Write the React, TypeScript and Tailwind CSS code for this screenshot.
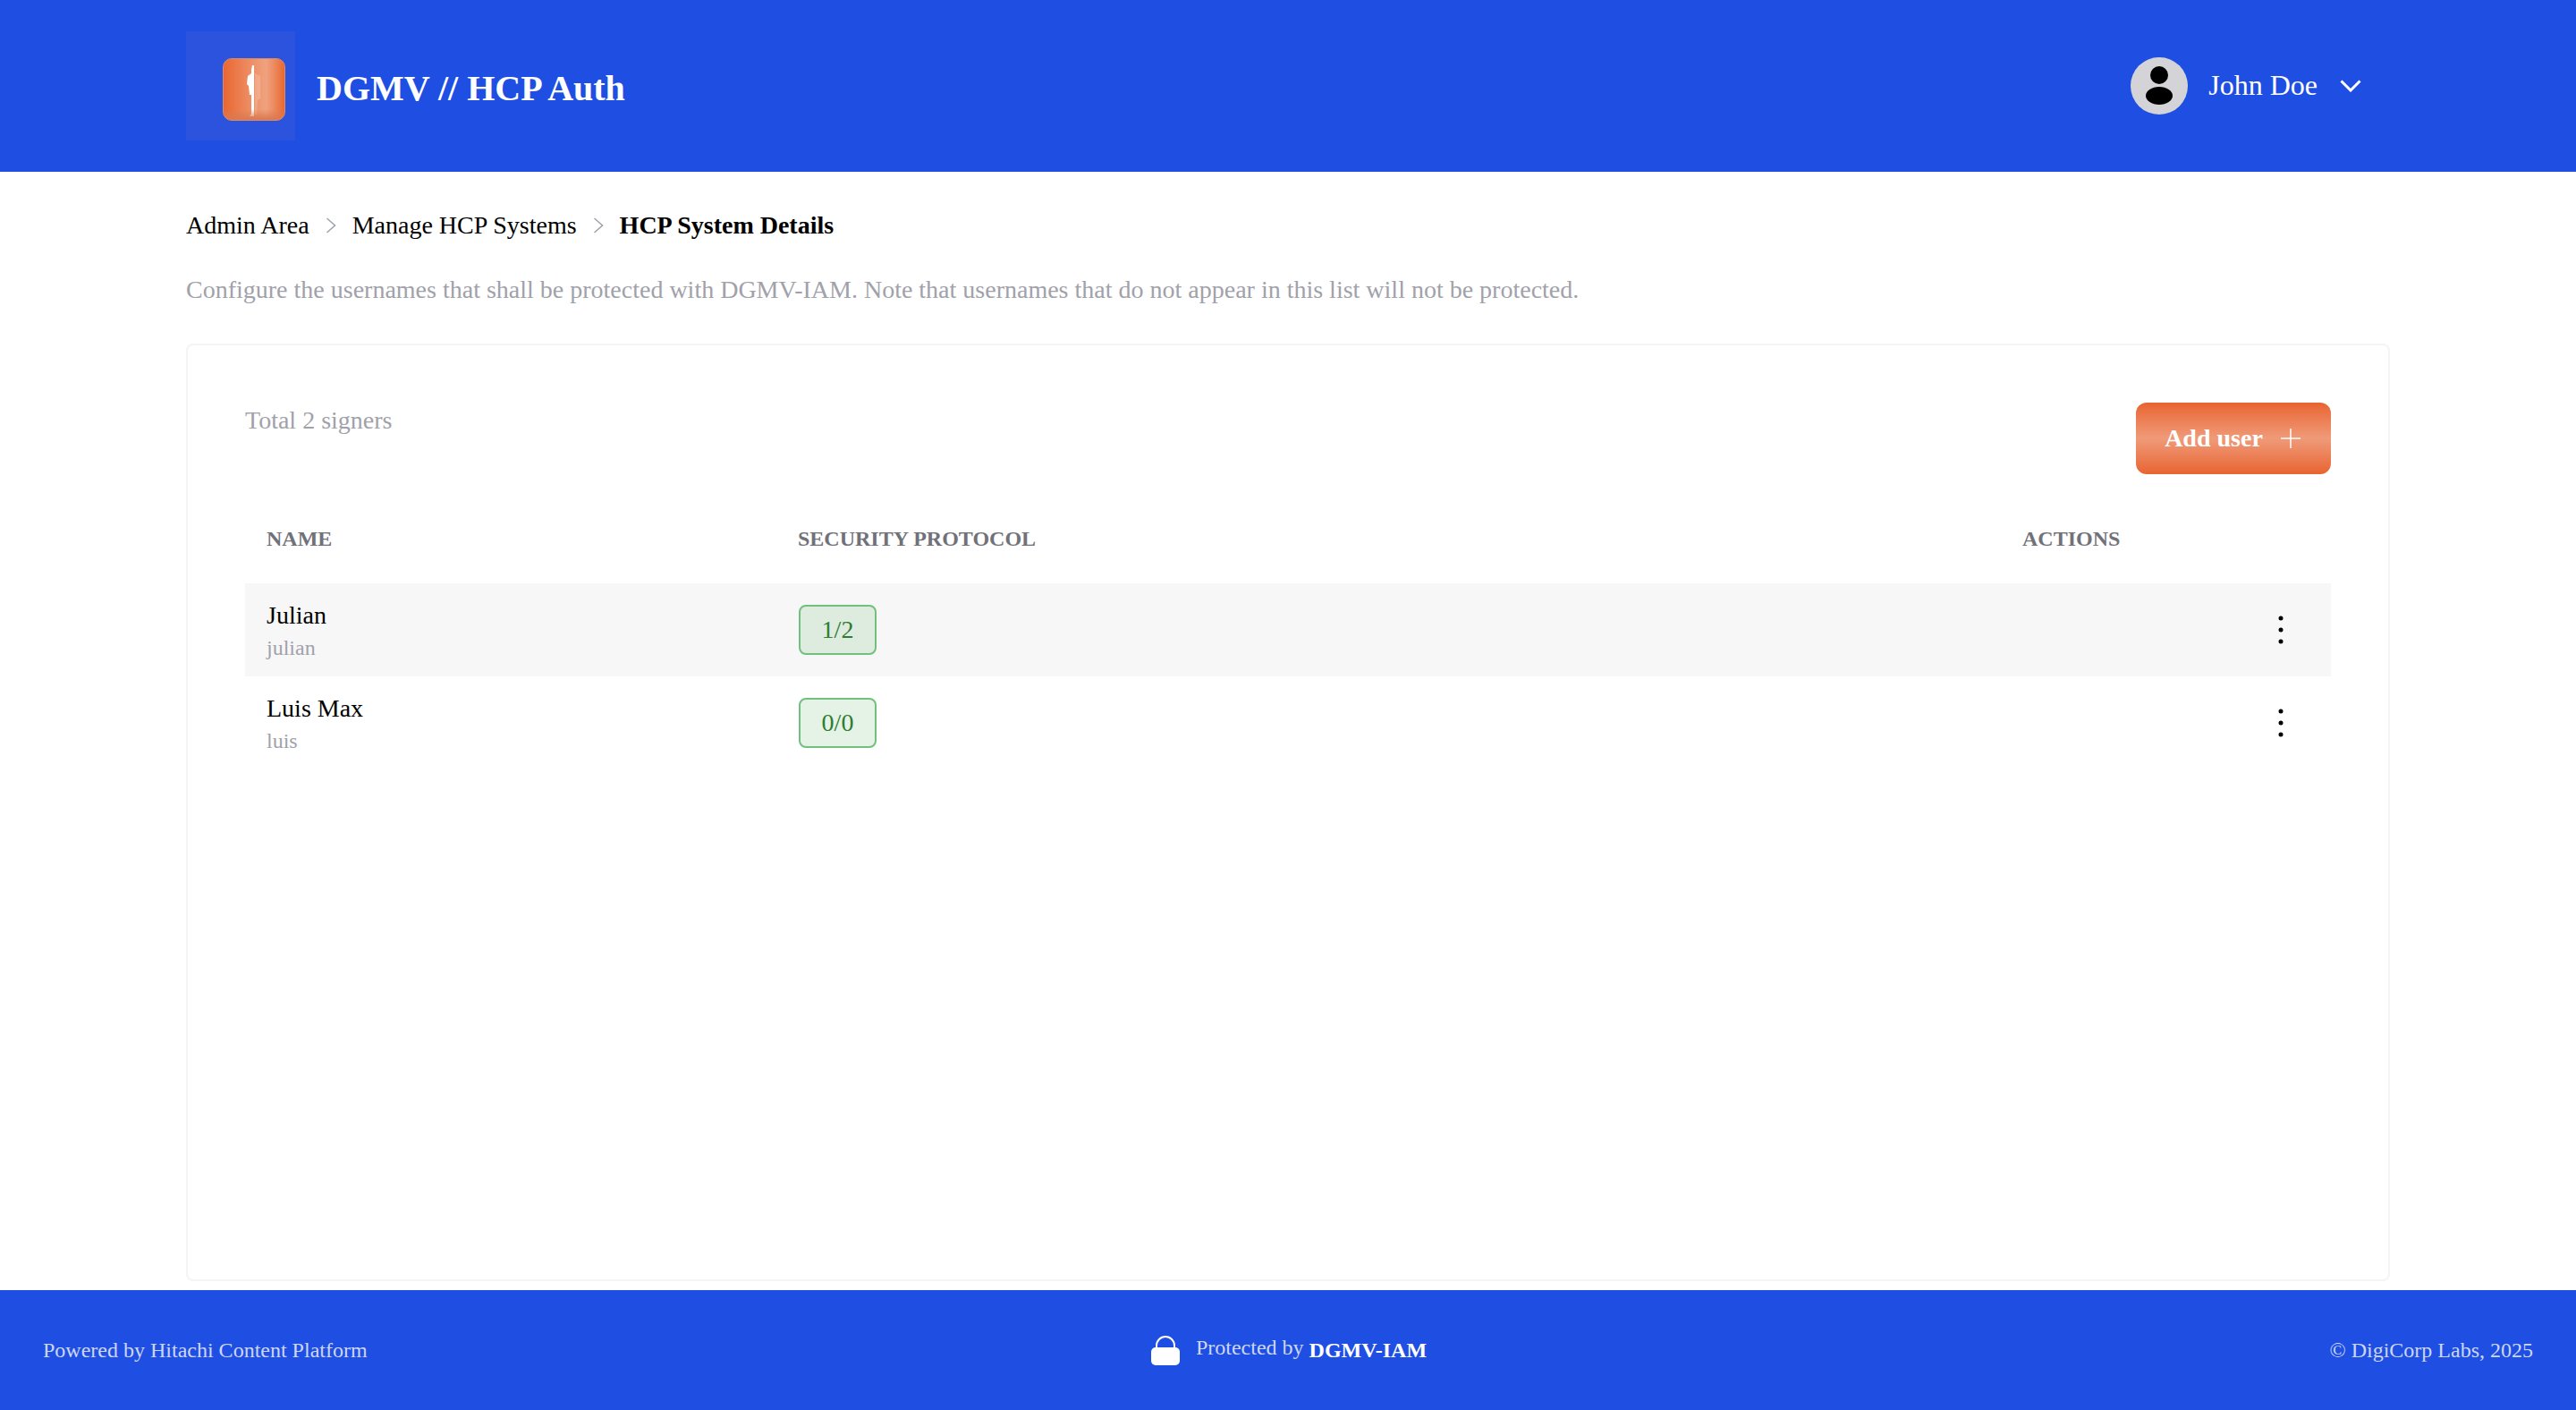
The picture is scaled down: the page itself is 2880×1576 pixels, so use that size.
import React from 'react';

const users = [
  { name: 'Julian', username: 'julian', protocol: '1/2' },
  { name: 'Luis Max', username: 'luis', protocol: '0/0' },
];

const Crumb = () => (
  <svg width="12" height="18" viewBox="0 0 12 18" fill="none" stroke="#9ca3af" strokeWidth="1.5">
    <path d="M1.5 1 L10.5 9 L1.5 17" />
  </svg>
);

const Logo = () => (
  <div className="w-[122px] h-[122px] bg-[#2c53dd] flex items-center justify-center shrink-0">
    <div className="relative w-[70px] h-[70px] ml-[30px] mt-[8px] rounded-[10px] border border-[#d98a6a] overflow-hidden bg-gradient-to-r from-[#e8672f] via-[#efa27f] via-70% to-[#e8672f]">
      <svg className="absolute inset-0" width="68" height="68" viewBox="0 0 68 68">
        <path
          d="M32 7 L34 7 L34 64 L29 64 L31 61 L31 40 L29 40 L28 30 L26 28 L27 19 L31 16 L31 12 Z"
          fill="#ffffff"
        />
        <path d="M35 16 L41 19 L41 44 L38 46 L37 62 L35 62 Z" fill="#ffffff" fillOpacity="0.18" />
      </svg>
      <div className="absolute left-0 right-0 bottom-0 h-[12px] bg-gradient-to-b from-transparent to-[#d9794f]" />
    </div>
  </div>
);

const App: React.FC = () => {
  return (
    <div className="h-screen flex flex-col bg-white font-['Liberation_Serif',serif]">
      {/* Header */}
      <header className="h-[192px] shrink-0 bg-[#1f4fe2] px-[208px] flex items-center justify-between">
        <div className="flex items-center gap-[24px]">
          <Logo />
          <h1 className="pt-[6px] text-[40px] font-bold text-white">DGMV // HCP Auth</h1>
        </div>
        <div className="flex items-center pr-[32px] -mt-[1px]">
          <div className="w-[64px] h-[64px] rounded-full bg-[#d4d4d8] flex items-center justify-center">
            <svg width="64" height="64" viewBox="0 0 64 64" fill="#000000">
              <circle cx="32" cy="20" r="10" />
              <ellipse cx="32" cy="43" rx="15" ry="10" />
            </svg>
          </div>
          <span className="ml-[23px] -mt-[2px] text-[32px] text-white">John Doe</span>
          <svg className="ml-[25px]" width="24" height="14" viewBox="0 0 24 14" fill="none" stroke="#ffffff" strokeWidth="3">
            <path d="M1.5 1.5 L12 12 L22.5 1.5" />
          </svg>
        </div>
      </header>

      {/* Main */}
      <main className="flex-1 min-h-0 px-[208px] flex flex-col">
        <nav className="mt-[44px] flex items-center gap-[18px] text-[28px] leading-[32px] text-black">
          <span>Admin Area</span>
          <Crumb />
          <span>Manage HCP Systems</span>
          <Crumb />
          <span className="font-bold">HCP System Details</span>
        </nav>
        <p className="mt-[40px] text-[28px] leading-[32px] text-[#a1a1aa]">
          Configure the usernames that shall be protected with DGMV-IAM. Note that usernames that do not appear in this list will not be protected.
        </p>

        <section className="mt-[44px] mb-[10px] flex-1 min-h-0 bg-white border-2 border-[#f4f4f5] rounded-[8px] p-[64px]">
          <div className="flex items-start justify-between">
            <span className="mt-[4px] text-[28px] leading-[32px] text-[#a1a1aa]">Total 2 signers</span>
            <button className="h-[80px] w-[218px] pr-[2px] rounded-[12px] flex items-center justify-center gap-[20px] text-[28px] font-bold text-white bg-gradient-to-b from-[#e8632f] via-[#ef9a78] to-[#e8632f]">
              <span>Add user</span>
              <svg width="22" height="22" viewBox="0 0 22 22" stroke="#ffffff" strokeWidth="1.5">
                <path d="M11 0 V22 M0 11 H22" />
              </svg>
            </button>
          </div>

          <div className="mt-[32px] mb-[10px] grid grid-cols-[594px_1369px_1fr] items-center h-[80px] text-[24px] font-bold uppercase text-[#71717a]">
            <div className="px-[24px]">Name</div>
            <div className="px-[24px]">Security Protocol</div>
            <div className="px-[24px]">Actions</div>
          </div>

          {users.map((user, index) => (
            <div
              key={user.username}
              className={`grid grid-cols-[594px_1370px_1fr] items-center h-[104px] ${index === 0 ? 'bg-[#f7f7f7]' : ''}`}
            >
              <div className="px-[24px] pt-[2px]">
                <div className="text-[28px] leading-[36px] text-black">{user.name}</div>
                <div className="mt-[2px] text-[24px] leading-[32px] text-[#a1a1aa]">{user.username}</div>
              </div>
              <div className="px-[24px]">
                <span className="ml-[1px] inline-flex items-center justify-center w-[87px] h-[56px] rounded-[8px] border-2 border-[#72c07f] bg-[#4caf50]/15 text-[28px] text-[#2e7d32]">
                  {user.protocol}
                </span>
              </div>
              <div className="flex justify-end pr-[53px]">
                <svg width="6" height="32" viewBox="0 0 6 32" fill="#000000">
                  <circle cx="3" cy="3" r="2.5" />
                  <circle cx="3" cy="16" r="2.5" />
                  <circle cx="3" cy="29" r="2.5" />
                </svg>
              </div>
            </div>
          ))}
        </section>
      </main>

      {/* Footer */}
      <footer className="h-[134px] shrink-0 bg-[#1f4fe2] px-[48px] grid grid-cols-3 items-center text-[24px] text-[#cdd6f6]">
        <div>Powered by Hitachi Content Platform</div>
        <div className="flex items-center justify-center pl-[2px]">
          <svg width="32" height="33" viewBox="0 0 32 33" fill="none">
            <path d="M6 15 V11 A10 10 0 0 1 26 11 V15" stroke="#ffffff" strokeWidth="2" />
            <rect x="0" y="13" width="32" height="20" rx="5" fill="#ffffff" />
          </svg>
          <span className="ml-[18px] -mt-[6px]">Protected by</span>
          <span className="ml-[6px] font-bold text-white">DGMV-IAM</span>
        </div>
        <div className="text-right">© DigiCorp Labs, 2025</div>
      </footer>
    </div>
  );
};

export default App;
